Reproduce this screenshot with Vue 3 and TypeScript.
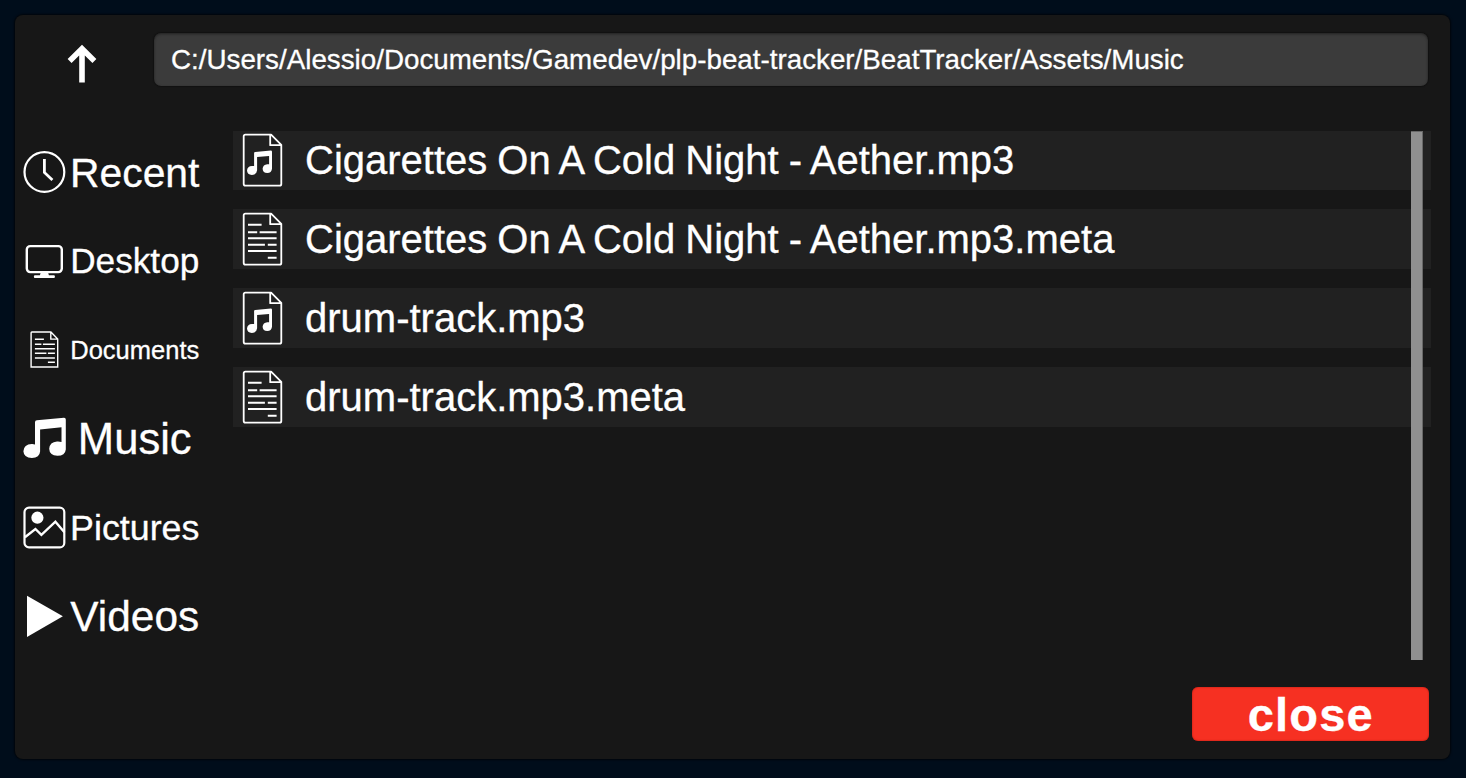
<script setup lang="ts">
type IconName = 'clock' | 'desktop' | 'document' | 'music' | 'picture' | 'play'

interface Place {
  label: string
  icon: IconName
  size: number
}

interface Entry {
  name: string
  kind: 'audio' | 'text'
}

const path = 'C:/Users/Alessio/Documents/Gamedev/plp-beat-tracker/BeatTracker/Assets/Music'

const places: Place[] = [
  { label: 'Recent', icon: 'clock', size: 40.8 },
  { label: 'Desktop', icon: 'desktop', size: 35.2 },
  { label: 'Documents', icon: 'document', size: 25.5 },
  { label: 'Music', icon: 'music', size: 43.6 },
  { label: 'Pictures', icon: 'picture', size: 35.8 },
  { label: 'Videos', icon: 'play', size: 42.4 },
]

const entries: Entry[] = [
  { name: 'Cigarettes On A Cold Night - Aether.mp3', kind: 'audio' },
  { name: 'Cigarettes On A Cold Night - Aether.mp3.meta', kind: 'text' },
  { name: 'drum-track.mp3', kind: 'audio' },
  { name: 'drum-track.mp3.meta', kind: 'text' },
]
</script>

<template>
  <main class="screen">
    <section class="panel">
      <header class="topbar">
        <button class="up" aria-label="Up">
          <svg width="30" height="40" viewBox="0 0 30 40">
            <path d="M15 39.500V6M2.600 18L15 5.800L27.400 18" fill="none" stroke="#fff" stroke-width="5.600" />
          </svg>
        </button>
        <div class="path"><span>{{ path }}</span></div>
      </header>

      <div class="body">
        <nav class="places">
          <div v-for="p in places" :key="p.label" class="place">
            <svg class="place-icon" width="44" height="44" viewBox="-0.4 0 44 44">
              <g v-if="p.icon === 'clock'" fill="none" stroke="#fff">
                <circle cx="22" cy="22" r="19.900" stroke-width="2.200" />
                <path d="M22 9v13.500l8 7.500" stroke-width="2.800" />
              </g>
              <g v-else-if="p.icon === 'desktop'">
                <rect x="4.400" y="7.100" width="35" height="26" rx="3.500" fill="none" stroke="#fff" stroke-width="2.400" />
                <path d="M18.500 33h7l1 3.200h5.500q1.200 1.500 0 2.800h-20q-1.200-1.300 0-2.800h5.500z" fill="#fff" />
              </g>
              <g v-else-if="p.icon === 'document'" fill="none" stroke="#fff" transform="translate(0 0.8)">
                <path d="M9.500 4.200H28.500L35.300 11.200V39.200H8.700V5q0-.8.8-.8zM28.400 4.400V11.300H35.300" stroke-width="1.400" />
                <path d="M12.500 11.500h9M12.500 16.500h6.500M20.500 16.500h12M12.500 21h20M12.500 25.500h11.500M25.500 25.500h7M12.500 30.200h20M25.500 34.500h7" stroke-width="1.500" />
              </g>
              <g v-else-if="p.icon === 'music'" fill="#fff" transform="translate(0 1)">
                <path d="M12.600 5.200Q12.600 3.300 14.500 3.200L41.500.7Q43.400.6 43.400 2.400V32.500Q42.800 38.800 35 38.800Q27 38.300 26.800 31.800Q27.300 25 34.600 24.500Q37 24.300 39.100 25.100V10.300L17.700 12.600V34.500Q17.200 40.700 9.500 40.900Q1.300 40.600 1 34.200Q1.500 27.300 9.300 27Q11 26.900 12.600 27.500z" />
              </g>
              <g v-else-if="p.icon === 'picture'" transform="translate(0 0.7)">
                <rect x="2.100" y="1.900" width="39.800" height="39.800" rx="4.500" fill="none" stroke="#fff" stroke-width="2.200" />
                <circle cx="15" cy="12" r="6.100" fill="#fff" />
                <path d="M2.500 31.500L13 23.300L19 29.200L33 16L42 26.500" fill="none" stroke="#fff" stroke-width="2.400" />
              </g>
              <path v-else d="M4.600 1.800L40.500 22.300L4.600 43z" fill="#fff" />
            </svg>
            <span class="place-label" :style="{ fontSize: p.size + 'px' }">{{ p.label }}</span>
          </div>
        </nav>

        <div class="files">
          <div class="list">
            <div v-for="e in entries" :key="e.name" class="entry">
              <svg class="file-icon" width="42" height="56" viewBox="-0.6 -0.5 42 56">
                <path
                  d="M3.800 2.100H29.500L39.700 12.300V51.500Q39.700 53.200 38 53.200H3.800Q2.100 53.200 2.100 51.500V3.800Q2.100 2.100 3.800 2.100zM28.600 2.500V12.700H39.500"
                  fill="none" stroke="#fff" stroke-width="1.800" stroke-linejoin="round"
                />
                <path
                  v-if="e.kind === 'audio'"
                  d="M12.500 20.500Q12.500 19.500 13.600 19.400L29.300 18.100Q30.400 18.100 30.400 19.200V36.300Q29.900 40.500 25.700 40.600Q21.200 40.400 21 36.200Q21.400 32 25.700 31.700H27.500V23.500L15.500 24.500V37.800Q15.100 42.300 10.300 42.400Q5.600 42.100 5.400 37.900Q5.900 33.600 10.300 33.400Q11.500 33.300 12.500 33.600z"
                  fill="#fff"
                />
                <path
                  v-else
                  d="M6.400 13.200H20M6.400 20.800H15.600M18 20.800H35M6.400 26.800H35M6.400 33.200H23.300M26.200 33.200H35M6.400 39.600H35M26.200 46.200H35"
                  fill="none" stroke="#fff" stroke-width="2"
                />
              </svg>
              <span class="file-name">{{ e.name }}</span>
            </div>
          </div>
          <div class="scrollbar"></div>
        </div>
      </div>

      <footer class="footer">
        <button class="close"><span>close</span></button>
      </footer>
    </section>
  </main>
</template>

<style>
body {
  margin: 0;
  background: #000d1b;
}
</style>

<style scoped>
.screen {
  box-sizing: border-box;
  width: 1466px;
  height: 778px;
  padding: 15px 16px 19px 15px;
  overflow: hidden;
  background: #000d1b;
  color: #fff;
  font-family: "Liberation Sans", Arial, sans-serif;
  -webkit-text-stroke: 0.3px #fff;
}

.panel {
  display: flex;
  flex-direction: column;
  box-sizing: border-box;
  width: 1434.500px;
  height: 744px;
  border-radius: 8px;
  background: #171717;
  box-shadow: 0 0 2px 1px rgba(0, 0, 0, 0.65);
}

button {
  padding: 0;
  border: 0;
  font-family: inherit;
  color: inherit;
}

.topbar {
  display: flex;
  flex: none;
  height: 115.500px;
}

.up {
  display: flex;
  width: 139px;
  height: 98px;
  padding: 28px 0 0 52px;
  box-sizing: border-box;
  background: none;
}

.path {
  display: flex;
  align-items: center;
  box-sizing: border-box;
  width: 1274px;
  height: 53px;
  margin-top: 18px;
  padding: 0 0 0 17px;
  border-radius: 7px;
  background: #3b3b3b;
  box-shadow: inset 0 1px 3px rgba(0, 0, 0, 0.45), 0 0 1px 1px rgba(0, 0, 0, 0.25);
  font-size: 27.770px;
  line-height: 52px;
  white-space: nowrap;
}

.body {
  display: flex;
  flex: none;
  height: 530px;
}

.places {
  display: flex;
  flex-direction: column;
  width: 218px;
  margin-top: -3px;
}

.place {
  display: flex;
  align-items: center;
  height: 88.800px;
  padding-left: 7px;
}

.place-icon {
  flex: none;
}

.place-label {
  width: 137.500px;
  padding-top: 1px;
  text-align: center;
  line-height: 46px;
  white-space: nowrap;
}

.place:first-child .place-label,
.place:last-child .place-label {
  padding-top: 3px;
}

.files {
  display: grid;
  width: 1197.500px;
}

.list {
  display: flex;
  grid-area: 1 / 1;
  flex-direction: column;
  gap: 19.900px;
}

.entry {
  display: flex;
  align-items: center;
  height: 59.100px;
  background: #212121;
}

.file-icon {
  flex: none;
  margin-left: 8px;
}

.file-name {
  margin-left: 22px;
  padding-top: 1px;
  font-size: 40px;
  line-height: 59px;
  word-spacing: -1.100px;
  white-space: nowrap;
}

.scrollbar {
  grid-area: 1 / 1;
  justify-self: end;
  width: 12px;
  height: 529.500px;
  margin-right: 8px;
  background: #909090;
  box-shadow: inset -1px 1px 0 #686868;
}

.footer {
  display: flex;
  justify-content: flex-end;
  padding: 26.500px 21px 0 0;
}

.close {
  width: 236.500px;
  height: 54px;
  border-radius: 6px;
  background: #f63022;
  box-shadow: inset 0 0 2px #a8180f;
  font-size: 47px;
  font-weight: 700;
  line-height: 54px;
  letter-spacing: 1.200px;
}

.close span {
  display: block;
  padding: 1px 0 0 1px;
}
</style>
